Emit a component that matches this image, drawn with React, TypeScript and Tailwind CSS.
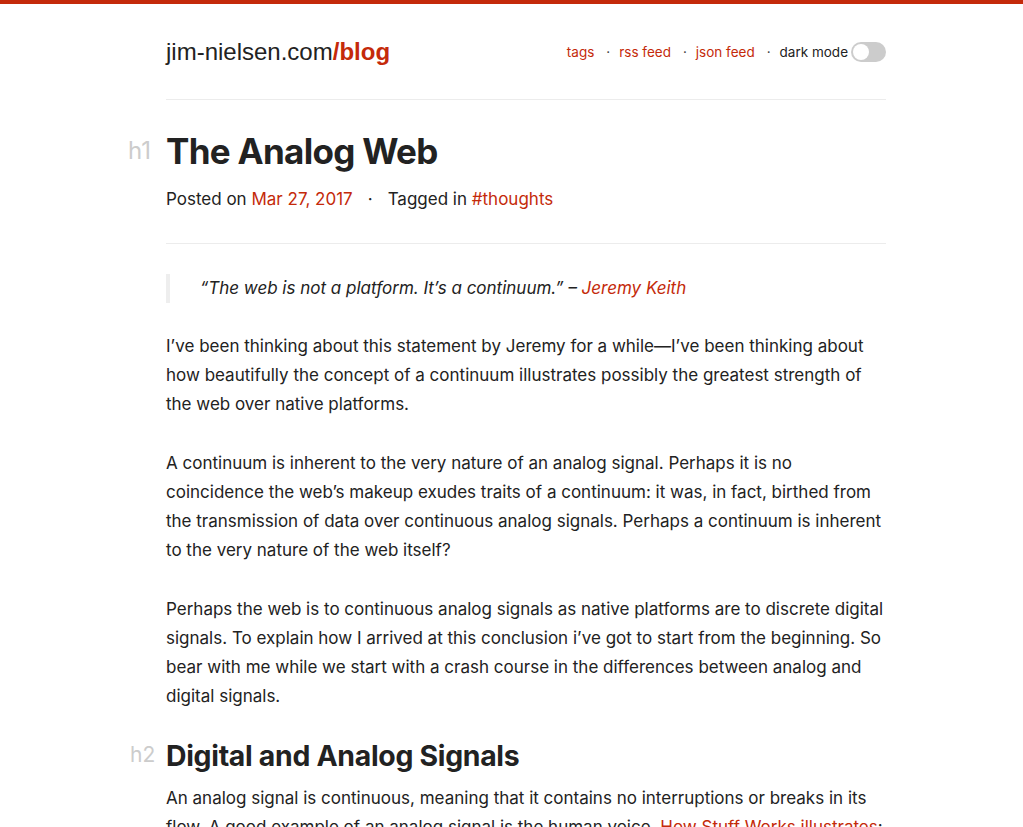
import React from "react";

const red = "text-[#c42a0a]";

function Heading({ level, children }: { level: "h1" | "h2"; children: React.ReactNode }) {
  if (level === "h1") {
    return (
      <div className="relative">
        <span className="absolute -left-[38px] top-[10px] text-[24px] leading-none text-[#ccc]">h1</span>
        <h1 className="text-[35px] font-bold leading-[44px] tracking-[-0.7px] text-[#222]">{children}</h1>
      </div>
    );
  }
  return (
    <div className="relative mt-[27px]">
      <span className="absolute -left-[36px] top-[6px] text-[21px] leading-none text-[#ccc]">h2</span>
      <h2 className="text-[28.4px] font-bold leading-[36px] tracking-[-0.3px] text-[#222]">{children}</h2>
    </div>
  );
}

export default function App() {
  return (
    <div className="min-h-[827px] bg-white text-[#222] font-['Inter',sans-serif]">
      <div className="h-[4px] bg-[#c42a0a]" />
      <div className="w-[720px] ml-[166px]">
        <header className="flex items-center justify-between pt-[34px] pb-[33px] border-b border-[#ececec]">
          <a className="text-[24px] leading-[28px] font-['Liberation_Sans',sans-serif] text-[#222]">
            jim-nielsen.com<span className={`font-bold ${red}`}>/blog</span>
          </a>
          <nav className="flex items-center text-[13.5px] leading-[20px]">
            <a className={red}>tags</a>
            <span className="ml-[12px] mr-[9px] text-[#444]">·</span>
            <a className={red}>rss feed</a>
            <span className="ml-[12px] mr-[9px] text-[#444]">·</span>
            <a className={red}>json feed</a>
            <span className="ml-[12px] mr-[9px] text-[#444]">·</span>
            <span className="text-[#222]">dark mode</span>
            <span className="ml-[3px] w-[35px] h-[20px] rounded-full bg-[#ccc] p-[2px] flex items-center">
              <span className="w-[16px] h-[16px] rounded-full bg-white" />
            </span>
          </nav>
        </header>

        <div className="pt-[29px] pb-[32px] border-b border-[#ececec]">
          <Heading level="h1">The Analog Web</Heading>
          <p className="mt-[14px] text-[17px] leading-[24px]">
            Posted on <a className={red}>Mar 27, 2017</a>
            <span className="mx-[15px]">·</span>
            Tagged in <a className={red}>#thoughts</a>
          </p>
        </div>

        <article className="text-[17px] leading-[29px]">
          <blockquote className="mt-[30px] border-l-4 border-[#eee] pl-[30px] italic">
            “The web is not a platform. It’s a continuum.” – <a className={red}>Jeremy Keith</a>
          </blockquote>
          <p className="mt-[29px]">
            I’ve been thinking about this statement by Jeremy for a while—I’ve been thinking about how beautifully the concept of a continuum illustrates possibly the greatest strength of the web over native platforms.
          </p>
          <p className="mt-[30px]">
            A continuum is inherent to the very nature of an analog signal. Perhaps it is no coincidence the web’s makeup exudes traits of a continuum: it was, in fact, birthed from the transmission of data over continuous analog signals. Perhaps a continuum is inherent to the very nature of the web itself?
          </p>
          <p className="mt-[30px]">
            Perhaps the web is to continuous analog signals as native platforms are to discrete digital signals. To explain how I arrived at this conclusion i’ve got to start from the beginning. So bear with me while we start with a crash course in the differences between analog and digital signals.
          </p>
          <Heading level="h2">Digital and Analog Signals</Heading>
          <p className="mt-[10px]">
            An analog signal is continuous, meaning that it contains no interruptions or breaks in its flow. A good example of an analog signal is the human voice. <a className={red}>How Stuff Works illustrates</a>:
          </p>
        </article>
      </div>
    </div>
  );
}
